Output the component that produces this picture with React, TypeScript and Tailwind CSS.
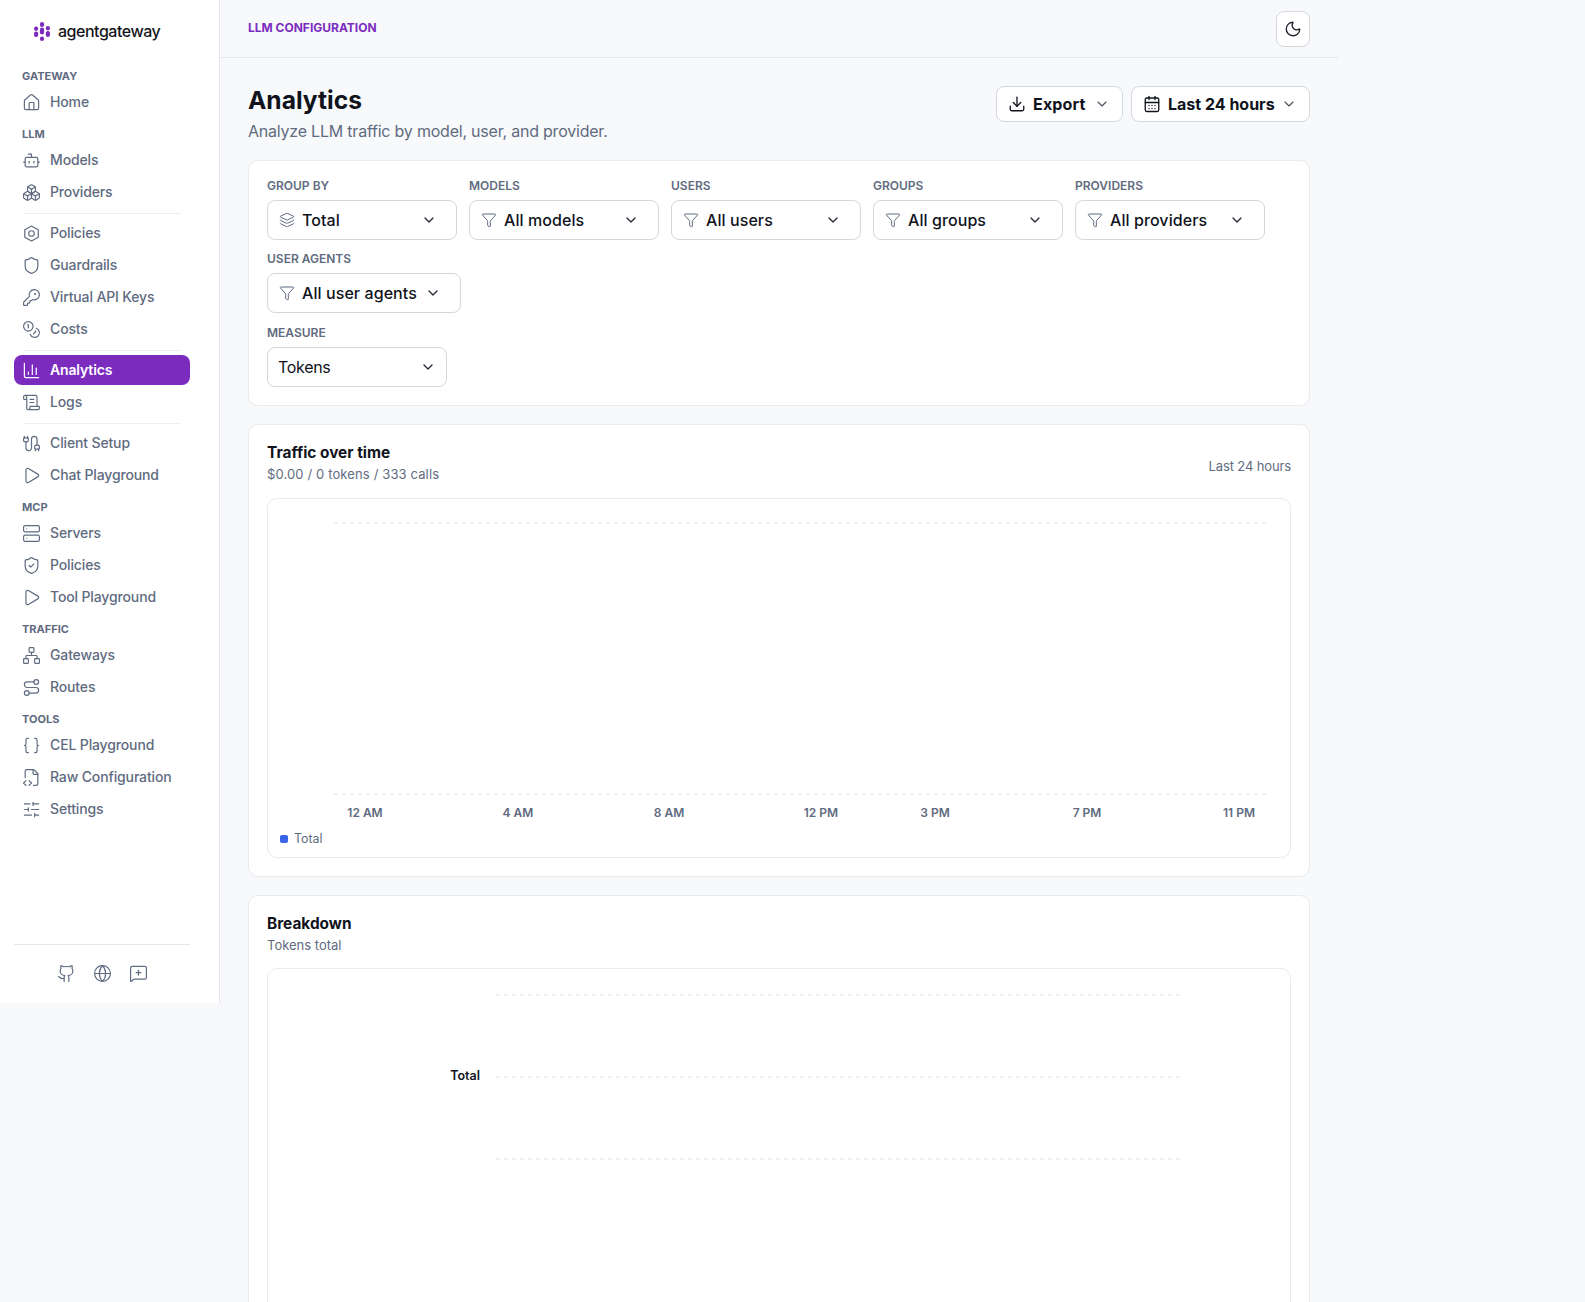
import type { ReactNode } from 'react';
import {
  House,
  Bot,
  Boxes,
  Shield,
  KeyRound,
  Coins,
  ChartColumn,
  ScrollText,
  Cable,
  Play,
  Server,
  ShieldCheck,
  Network,
  Route,
  Braces,
  FileCode2,
  SlidersHorizontal,
  Github,
  Globe,
  MessageSquarePlus,
  Moon,
  Download,
  CalendarDays,
  ChevronDown,
  Layers,
  Funnel,
} from 'lucide-react';

function HexCog({ size = 19, className = '' }: { size?: number; className?: string }) {
  return (
    <svg width={size} height={size} viewBox="0 0 24 24" fill="none" stroke="currentColor" strokeWidth="1.5" strokeLinejoin="round" className={className}>
      <path d="M12 2.5l8.5 4.8v9.4L12 21.5l-8.5-4.8V7.3z" />
      <circle cx="12" cy="12" r="3.5" />
    </svg>
  );
}

function Logo() {
  return (
    <svg width="16" height="19" viewBox="0 0 16 19" fill="#7b2cbf">
      <rect x="0" y="4.5" width="4.2" height="4.4" rx="2.1" />
      <rect x="0" y="9.5" width="4.2" height="5.5" rx="2.1" />
      <rect x="5.9" y="0" width="4.2" height="5" rx="2.1" />
      <rect x="5.9" y="5.6" width="4.2" height="7" rx="2.1" />
      <rect x="5.9" y="14.6" width="4.2" height="4.4" rx="2.1" />
      <rect x="11.8" y="4" width="4.2" height="4.4" rx="2.1" />
      <rect x="11.8" y="9" width="4.2" height="6" rx="2.1" />
    </svg>
  );
}

type Item = { label: string; icon: ReactNode; active?: boolean };
const ic = { size: 19, strokeWidth: 1.5 };

function NavItem({ label, icon, active }: Item) {
  return (
    <div className={`flex h-[30px] items-center gap-[9px] rounded-lg pl-[8px] pr-[9px] text-[14px] tracking-[-0.01em] ${active ? 'bg-[#7b2cbf] font-semibold text-white' : 'font-medium text-[#5f6b80]'}`}>
      <span className="flex w-[19px] justify-center">{icon}</span>
      <span className="pb-[1px]">{label}</span>
    </div>
  );
}

function Section({ title, children }: { title: string; children: ReactNode }) {
  return (
    <div>
      <div className="mb-[2px] flex h-[18px] items-center px-[8px] text-[11px] font-bold uppercase text-[#5f6b80]">{title}</div>
      <div className="flex flex-col gap-[2px]">{children}</div>
    </div>
  );
}

const Sep = () => <div className="mx-[9px] mb-[2px] mt-[4px] border-t border-[#eceef2]" />;

function Sidebar() {
  return (
    <aside className="h-[1003px] w-[220px] shrink-0 border-r border-[#e4e6eb] bg-white px-[14px]">
      <div className="flex h-full w-[176px] flex-col">
        <div className="flex h-[62px] items-center gap-[8px] pl-[20px]">
          <Logo />
          <span className="text-[16px] font-medium tracking-[-0.03em] text-[#15161c]">agentgateway</span>
        </div>
        <div className="flex flex-col gap-[8px] pt-[5px]">
          <Section title="Gateway">
            <NavItem label="Home" icon={<House {...ic} />} />
          </Section>
          <Section title="LLM">
            <NavItem label="Models" icon={<Bot {...ic} />} />
            <NavItem label="Providers" icon={<Boxes {...ic} />} />
            <Sep />
            <NavItem label="Policies" icon={<HexCog />} />
            <NavItem label="Guardrails" icon={<Shield {...ic} />} />
            <NavItem label="Virtual API Keys" icon={<KeyRound {...ic} />} />
            <NavItem label="Costs" icon={<Coins {...ic} />} />
            <Sep />
            <NavItem label="Analytics" icon={<ChartColumn {...ic} />} active />
            <NavItem label="Logs" icon={<ScrollText {...ic} />} />
            <Sep />
            <NavItem label="Client Setup" icon={<Cable {...ic} />} />
            <NavItem label="Chat Playground" icon={<Play {...ic} />} />
          </Section>
          <Section title="MCP">
            <NavItem label="Servers" icon={<Server {...ic} />} />
            <NavItem label="Policies" icon={<ShieldCheck {...ic} />} />
            <NavItem label="Tool Playground" icon={<Play {...ic} />} />
          </Section>
          <Section title="Traffic">
            <NavItem label="Gateways" icon={<Network {...ic} />} />
            <NavItem label="Routes" icon={<Route {...ic} />} />
          </Section>
          <Section title="Tools">
            <NavItem label="CEL Playground" icon={<Braces {...ic} />} />
            <NavItem label="Raw Configuration" icon={<FileCode2 {...ic} />} />
            <NavItem label="Settings" icon={<SlidersHorizontal {...ic} />} />
          </Section>
        </div>
        <div className="mt-auto flex h-[59px] items-center justify-center gap-[17px] border-t border-[#e4e6eb] pb-[2px] text-[#5f6b80]">
          <Github {...ic} />
          <Globe {...ic} />
          <MessageSquarePlus {...ic} />
        </div>
      </div>
    </aside>
  );
}

function Field({ label, icon, value, width }: { label: string; icon?: ReactNode; value: string; width: string }) {
  return (
    <div className="flex flex-col">
      <div className="mb-[6px] h-[15px] text-[12px] leading-[13px] font-semibold uppercase text-[#5f6b80]">{label}</div>
      <div className={`flex h-[40px] items-center justify-between rounded-lg border border-[#d4d7de] bg-white ${icon ? 'pl-[11px] pr-[19px]' : 'pl-[10px] pr-[10px]'} ${width}`}>
        <span className={`flex items-center gap-[7px] text-[16px] text-[#10131c] ${icon ? 'font-medium tracking-[0.005em]' : 'tracking-[-0.02em]'}`}>
          {icon}
          {value}
        </span>
        <ChevronDown size={16} strokeWidth={2} className="text-[#262b36]" />
      </div>
    </div>
  );
}

const funnel = <Funnel size={16} strokeWidth={1.5} className="text-[#5f6b80]" />;

function TrafficChart() {
  const ticks = [
    ['12 AM', 364],
    ['4 AM', 517],
    ['8 AM', 668],
    ['12 PM', 820],
    ['3 PM', 934],
    ['7 PM', 1086],
    ['11 PM', 1238],
  ] as const;
  return (
    <svg width="1022" height="330" viewBox="267 498 1022 330" className="block">
      <line x1="333" x2="1265" y1="522" y2="522" stroke="#eef0f3" strokeWidth="2" strokeDasharray="4 4" />
      <line x1="333" x2="1265" y1="793" y2="793" stroke="#eef0f3" strokeWidth="2" strokeDasharray="4 4" />
      {ticks.map(([t, x]) => (
        <text key={t} x={x} y="816" textAnchor="middle" fontSize="12" fontWeight="600" fill="#5f6b80">
          {t}
        </text>
      ))}
    </svg>
  );
}

function BreakdownChart() {
  return (
    <svg width="1022" height="340" viewBox="267 968 1022 340" className="block">
      <line x1="495" x2="1180" y1="994" y2="994" stroke="#eef0f3" strokeWidth="2" strokeDasharray="4 4" />
      <line x1="495" x2="1180" y1="1076" y2="1076" stroke="#eef0f3" strokeWidth="2" strokeDasharray="4 4" />
      <line x1="495" x2="1180" y1="1158" y2="1158" stroke="#eef0f3" strokeWidth="2" strokeDasharray="4 4" />
      <text x="479" y="1079" textAnchor="end" fontSize="12.5" fontWeight="600" fill="#10131c">
        Total
      </text>
    </svg>
  );
}

const card = 'rounded-[10px] border border-[#e8eaee] bg-white';
const actionBtn = 'flex h-[36px] items-center gap-[6px] rounded-lg border border-[#d4d7de] bg-white pl-[11px] text-[16px] font-bold text-[#10131c]';

export default function App() {
  return (
    <div className="flex h-[1302px] items-start overflow-hidden bg-[#f8f9fb] font-['Inter',sans-serif]">
      <Sidebar />
      <main className="w-[1118px] shrink-0">
        <header className="flex h-[58px] items-center justify-between border-b border-[#e4e6eb] px-[28px]">
          <span className="mb-[2px] text-[12px] font-bold uppercase text-[#7b2cbf]">LLM Configuration</span>
          <button className="flex h-[36px] w-[34px] items-center justify-center rounded-lg border border-[#d4d7de] bg-white text-[#1b1f2a]">
            <Moon size={18} strokeWidth={1.75} />
          </button>
        </header>

        <div className="px-[28px] pt-[27px]">
          <div className="mb-[17px] flex items-start justify-between">
            <div>
              <h1 className="text-[24.6px] leading-[30px] font-bold text-[#10131c]">Analytics</h1>
              <p className="mt-[4px] text-[16px] leading-[24px] tracking-[-0.0135em] text-[#5f6b80]">Analyze LLM traffic by model, user, and provider.</p>
            </div>
            <div className="mt-[1px] flex gap-[8px]">
              <button className={`${actionBtn} w-[127px]`}>
                <Download size={18} strokeWidth={1.75} />
                <span className="ml-[1px] tracking-[0.01em]">Export</span>
                <ChevronDown size={16} strokeWidth={1.75} className="ml-[2px] text-[#4b5563]" />
              </button>
              <button className={`${actionBtn} w-[179px]`}>
                <CalendarDays size={18} strokeWidth={1.75} />
                <span className="ml-[1px]">Last 24 hours</span>
                <ChevronDown size={16} strokeWidth={1.75} className="text-[#4b5563]" />
              </button>
            </div>
          </div>

          <section className={`${card} mb-[18px] flex flex-col gap-[12px] p-[18px]`}>
            <div className="flex gap-[12px]">
              <Field label="Group by" value="Total" width="w-[190px]" icon={<Layers size={16} strokeWidth={1.5} className="text-[#5f6b80]" />} />
              <Field label="Models" value="All models" width="w-[190px]" icon={funnel} />
              <Field label="Users" value="All users" width="w-[190px]" icon={funnel} />
              <Field label="Groups" value="All groups" width="w-[190px]" icon={funnel} />
              <Field label="Providers" value="All providers" width="w-[190px]" icon={funnel} />
            </div>
            <div className="self-start">
              <Field label="User agents" value="All user agents" width="w-[194px]" icon={funnel} />
            </div>
            <div className="mt-[1px] self-start">
              <Field label="Measure" value="Tokens" width="w-[180px]" />
            </div>
          </section>

          <section className={`${card} mb-[18px] px-[18px] pb-[18px] pt-[17px]`}>
            <div className="mb-[14px] flex items-center justify-between">
              <div>
                <div className="text-[15.4px] leading-[22px] font-bold text-[#10131c]">Traffic over time</div>
                <div className="text-[13px] leading-[20px] tracking-[0.01em] text-[#5f6b80]">$0.00 / 0 tokens / 333 calls</div>
              </div>
              <span className="pt-[7px] text-[13px] tracking-[-0.01em] text-[#5f6b80]">Last 24 hours</span>
            </div>
            <div className={`${card} h-[360px]`}>
              <TrafficChart />
              <div className="flex items-center gap-[6px] pl-[12px] pt-[1px] text-[12.4px] text-[#5f6b80]">
                <span className="h-[8px] w-[8px] rounded-[2px] bg-[#3b63e8]" />
                Total
              </div>
            </div>
          </section>

          <section className={`${card} px-[18px] pb-[18px] pt-[17px]`}>
            <div className="mb-[13px]">
              <div className="text-[15.4px] leading-[22px] font-bold text-[#10131c]">Breakdown</div>
              <div className="text-[13px] leading-[20px] text-[#5f6b80]">Tokens total</div>
            </div>
            <div className={`${card} h-[400px]`}>
              <BreakdownChart />
            </div>
          </section>
        </div>
      </main>
    </div>
  );
}
